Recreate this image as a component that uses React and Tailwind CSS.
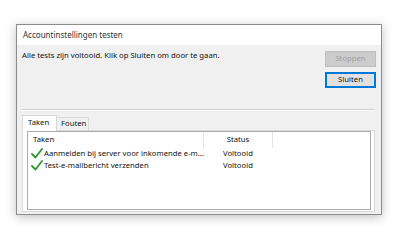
import React from 'react';

const font = { fontFamily: '"Noto Sans", "DejaVu Sans", sans-serif' };

function Check() {
    return (
        <svg width="12" height="11" viewBox="0 0 12 11" className="shrink-0">
            <path d="M1 6 L4.5 9.5 L11 1" fill="none" stroke="#2f9a2f" strokeWidth="1.8" strokeLinecap="round" strokeLinejoin="round" />
        </svg>
    );
}

const tasks = [
    { name: 'Aanmelden bij server voor inkomende e-m...', status: 'Voltooid' },
    { name: 'Test-e-mailbericht verzenden', status: 'Voltooid' },
];

export default function App() {
    return (
        <div className="w-[400px] h-[244px] bg-white pt-[24px] pl-[16px] text-[7.7px] text-[#111]" style={font}>
            <div className="w-[366px] h-[191px] flex flex-col border border-[#8c8c8c] shadow-[0_2px_10px_rgba(0,0,0,0.25)]">
                <div className="h-[20px] bg-white flex items-center pl-[6px] text-[8px] text-[#333]">
                    Accountinstellingen testen
                </div>
                <div className="flex-1 bg-[#f0f0f0] flex flex-col px-[5px]">
                    <div className="flex justify-between pt-[6px] h-[64px]">
                        <div className="leading-[9px]">Alle tests zijn voltooid. Klik op Sluiten om door te gaan.</div>
                        <div className="flex flex-col gap-[5px]">
                            <div className="w-[51px] h-[16px] bg-[#cccccc] border border-[#bfbfbf] text-[#a0a0a0] flex items-center justify-center">Stoppen</div>
                            <div className="w-[51px] h-[16px] bg-[#e1e1e1] border-2 border-[#0078d7] text-[#111] flex items-center justify-center">Sluiten</div>
                        </div>
                    </div>
                    <div className="h-px w-[353px] bg-[#d0d0d0] border-b border-white box-content" />
                    <div className="flex items-end mt-[3px] h-[16px] leading-none">
                        <div className="w-[35px] h-[16px] bg-white border border-b-0 border-[#d9d9d9] pl-[5px] pt-[3px] relative top-px z-10">Taken</div>
                        <div className="w-[32px] h-[13px] bg-[#f0f0f0] border border-b-0 border-l-0 border-[#d9d9d9] pl-[4px] pt-[2px]">Fouten</div>
                    </div>
                    <div className="w-[353px] h-[82px] bg-white border border-[#d9d9d9] pl-[4px]">
                        <div className="w-[344px] h-[79px] border border-[#adadad] bg-white">
                            <div className="flex h-[16px] items-center">
                                <div className="w-[175px] pl-[5px]">Taken</div>
                                <div className="w-[70px] h-full border-l border-r border-[#e5e5e5] flex items-center justify-center">Status</div>
                            </div>
                            {tasks.map((t, i) => (
                                <div key={i} className="flex h-[12px] items-center">
                                    <div className="w-[175px] pl-[3px] flex items-center gap-[1px] whitespace-nowrap">
                                        <Check />
                                        <span>{t.name}</span>
                                    </div>
                                    <div className="w-[70px] pl-[20px]">{t.status}</div>
                                </div>
                            ))}
                        </div>
                    </div>
                </div>
            </div>
        </div>
    );
}
